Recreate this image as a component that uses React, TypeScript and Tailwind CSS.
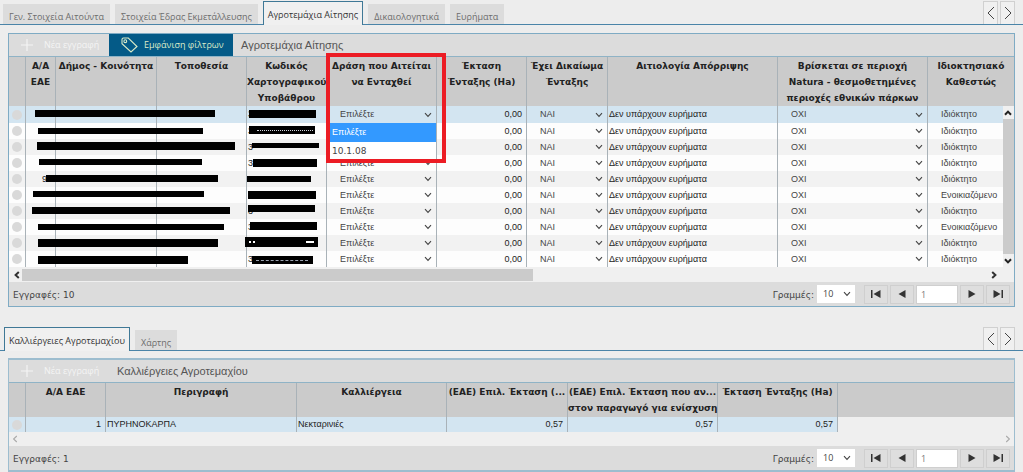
import { useState } from "react";
import type { ReactNode } from "react";

type Bar = [left: number, top: number, width: number, height: number];

interface Parcel {
  prefix?: string;
  code?: string;
  bar: Bar;
  codeBar: Bar;
  marks?: ReactNode;
  ownership: string;
}

const OWNED = "Ιδιόκτητο";
const RENTED = "Ενοικιαζόμενο";

const parcels: Parcel[] = [
  { bar: [9, 4, 180, 7], codeBar: [2, 4, 67, 8], code: "3", ownership: OWNED },
  {
    bar: [12, 5, 165, 6],
    codeBar: [2, 3, 66, 8],
    code: "3",
    marks: <span className="absolute left-2 top-1 w-14 border-t border-dotted border-gray-300" />,
    ownership: OWNED,
  },
  { bar: [11, 3, 198, 8], codeBar: [5, 4, 67, 5], code: "3", ownership: OWNED },
  { bar: [13, 4, 163, 6], codeBar: [6, 4, 64, 8], code: "3", ownership: OWNED },
  { prefix: "9", bar: [20, 4, 172, 7], codeBar: [0, 5, 64, 6], ownership: OWNED },
  { bar: [7, 4, 171, 6], codeBar: [1, 4, 68, 8], ownership: RENTED },
  { bar: [6, 4, 198, 7], codeBar: [1, 2, 67, 7], code: "3", ownership: OWNED },
  { bar: [12, 5, 186, 6], codeBar: [3, 3, 67, 8], code: "3", ownership: RENTED },
  {
    bar: [12, 4, 180, 8],
    codeBar: [-2, 2, 73, 10],
    marks: (
      <>
        <span className="absolute left-1 top-1 w-1.5 border-t-2 border-dotted border-white" />
        <span className="absolute right-1 top-1 w-2 border-t-2 border-white" />
      </>
    ),
    ownership: OWNED,
  },
  {
    bar: [12, 5, 150, 8],
    codeBar: [5, 5, 61, 8],
    code: "3",
    marks: <span className="absolute left-1 top-1 w-13 border-t border-dashed border-gray-400" />,
    ownership: OWNED,
  },
];

function Redaction({ bar, children }: { bar: Bar; children?: ReactNode }) {
  const [left, top, width, height] = bar;
  return (
    <span className="absolute z-10 bg-black" style={{ left, top, width, height }}>
      {children}
    </span>
  );
}

function Chevron({ className }: { className: string }) {
  return (
    <svg viewBox="0 0 8 6" className={className} fill="none" stroke="currentColor" strokeWidth="1.1" aria-hidden="true">
      <path d="M1 1.2 4 4.4 7 1.2" />
    </svg>
  );
}

function CellSelect({ label, options }: { label: string; options: string[] }) {
  return (
    <div className="relative flex items-center text-[#444]">
      <select aria-label={label} className="h-4 w-full appearance-none bg-transparent pl-[13px] outline-none">
        {options.map((o) => (
          <option key={o}>{o}</option>
        ))}
      </select>
      <Chevron className="pointer-events-none absolute right-1 h-1.5 w-2" />
    </div>
  );
}

function TabArrows() {
  return (
    <div className="ml-auto mr-2 flex gap-0.5 self-stretch text-[#444]">
      {["M9 4 3 10l6 6", "M3 4l6 6-6 6"].map((d, i) => (
        <button
          key={d}
          aria-label={i === 0 ? "Προηγούμενη καρτέλα" : "Επόμενη καρτέλα"}
          className="flex w-[15px] items-center justify-center border border-b-0 border-[#d0d0d0] bg-[#f0f0f0]"
        >
          <svg viewBox="0 0 12 20" className="h-5 w-3" fill="none" stroke="currentColor" strokeWidth="1">
            <path d={d} />
          </svg>
        </button>
      ))}
    </div>
  );
}

function Tabs({ items, initial, first }: { items: string[]; initial: number; first: string }) {
  const [active, setActive] = useState(initial);
  return (
    <div className="flex h-6 items-end border-b border-[#4a84a8] font-['Open_Sans',sans-serif] leading-3" role="tablist">
      <div className={`flex items-end gap-[5px] self-stretch ${first}`}>
        {items.map((t, i) => (
          <button
            key={t}
            role="tab"
            aria-selected={i === active}
            onClick={() => setActive(i)}
            className={
              i === active
                ? "-mb-px h-6 border border-b-0 border-[#3f7896] bg-[#f0f0f0] px-1 pt-0.5 text-[#333]"
                : "h-5 bg-[#dcdcdc] px-1.5 pt-1.5 text-[#6c6c6c]"
            }
          >
            {t}
          </button>
        ))}
      </div>
      <TabArrows />
    </div>
  );
}

function NewButton() {
  return (
    <button className="flex h-full w-[100px] items-center gap-[11px] whitespace-nowrap pl-3 font-['Open_Sans',sans-serif] text-[9px] text-[#f4f4f4]">
      <svg viewBox="0 0 12 12" className="size-3 shrink-0" stroke="currentColor" strokeWidth="1.2">
        <path d="M6 0v12M0 6h12" />
      </svg>
      Νέα εγγραφή
    </button>
  );
}

function Pager({ count, id }: { count: number; id: string }) {
  const button = "flex h-[19px] w-6 items-center justify-center border border-[#cfcfcf] bg-[#dedede] text-[#333]";
  return (
    <div className="flex h-6 items-center bg-[#dcdcdc] pl-1 text-[#444]">
      <span className="pt-1">Εγγραφές: {count}</span>
      <label htmlFor={id} className="ml-auto mr-[3px] pt-1">
        Γραμμές:
      </label>
      <div className="relative mr-[9px] flex items-center">
        <select id={id} className="h-[18px] w-[38px] appearance-none bg-white pl-1.5 font-['Open_Sans',sans-serif] outline-none">
          <option>10</option>
          <option>20</option>
        </select>
        <Chevron className="pointer-events-none absolute right-1 h-1.5 w-2" />
      </div>
      <div className="mr-1 flex items-center gap-0.5">
        <button className={button} aria-label="Πρώτη σελίδα">
          <svg viewBox="0 0 10 8" className="h-2 w-2.5" fill="currentColor">
            <path d="M0 0h1.5v8H0zM9.500 0v8L2.500 4z" />
          </svg>
        </button>
        <button className={button} aria-label="Προηγούμενη σελίδα">
          <svg viewBox="0 0 8 8" className="size-2" fill="currentColor">
            <path d="M7.500 0v8L0.500 4z" />
          </svg>
        </button>
        <input
          aria-label="Σελίδα"
          defaultValue="1"
          className="h-[19px] w-[42px] border border-[#cfcfcf] bg-white pl-1 font-['Open_Sans',sans-serif] text-[#777] outline-none"
        />
        <button className={button} aria-label="Επόμενη σελίδα">
          <svg viewBox="0 0 8 8" className="size-2" fill="currentColor">
            <path d="M0.500 0v8L7.500 4z" />
          </svg>
        </button>
        <button className={button} aria-label="Τελευταία σελίδα">
          <svg viewBox="0 0 10 8" className="h-2 w-2.5" fill="currentColor">
            <path d="M8.500 0H10v8H8.500zM0.500 0v8l7-4z" />
          </svg>
        </button>
      </div>
    </div>
  );
}

const line = "border-r border-[#a9b2b8]";
const head = `${line} p-0 pt-px align-top whitespace-pre font-bold text-[#222]`;
const cell = `${line} p-0 whitespace-nowrap`;

function ParcelTable() {
  const [open, setOpen] = useState(true);
  return (
    <table className="w-full table-fixed border-separate border-spacing-0 font-['Liberation_Sans',sans-serif] text-[9px] leading-[15px]">
      <colgroup>
        <col className="w-[17px]" />
        <col className="w-[30px]" />
        <col className="w-[101px]" />
        <col className="w-[90px]" />
        <col className="w-[80px]" />
        <col className="w-[110px]" />
        <col className="w-[90px]" />
        <col className="w-[81px]" />
        <col />
        <col className="w-[150px]" />
        <col className="w-[75px]" />
        <col className="w-[11px]" />
      </colgroup>
      <thead>
        <tr className="h-[49px] bg-[#cbcbcb] font-['DejaVu_Sans',sans-serif] text-[9px] leading-4">
          <th className={head} />
          <th className={head}>{"Α/Α\nΕΑΕ"}</th>
          <th className={head}>Δήμος - Κοινότητα</th>
          <th className={head}>Τοποθεσία</th>
          <th className={head}>{"Κωδικός\nΧαρτογραφικού\nΥποβάθρου"}</th>
          <th className={`${head} relative`}>
            {"Δράση που Αιτείται\nνα Ενταχθεί"}
            <span className="pointer-events-none absolute -left-px -top-1 z-30 h-[110px] w-[120px] border-4 border-[#ec1c24]" />
          </th>
          <th className={head}>{"Έκταση\nΈνταξης (Ha)"}</th>
          <th className={head}>{"Έχει Δικαίωμα\nΈνταξης"}</th>
          <th className={head}>Αιτιολογία Απόρριψης</th>
          <th className={head}>{"Βρίσκεται σε περιοχή\nNatura - θεσμοθετημένες\nπεριοχές εθνικών πάρκων"}</th>
          <th colSpan={2} className="whitespace-pre p-0 pt-px align-top font-bold text-[#222]">
            {"Ιδιοκτησιακό\nΚαθεστώς"}
          </th>
        </tr>
      </thead>
      <tbody className="text-[#222]">
        {parcels.map((p, i) => (
          <tr key={i} className={i === 0 ? "h-[17px] bg-[#d3e5f1]" : i % 2 ? "h-4 bg-[#fdfdfd]" : "h-4 bg-[#f2f2f2]"}>
            <td className={cell}>
              <span className="mx-auto block size-2.5 rounded-full bg-[#d9d9d9]" />
            </td>
            <td className={`${cell} relative pl-4`}>
              {p.prefix}
              <Redaction bar={p.bar} />
            </td>
            <td className={cell} />
            <td className={cell} />
            <td className={`${cell} relative pl-px`}>
              {p.code}
              <Redaction bar={p.codeBar}>{p.marks}</Redaction>
            </td>
            <td className={`${cell} relative`} onClick={i === 0 ? () => setOpen(!open) : undefined}>
              <CellSelect label="Δράση που αιτείται να ενταχθεί" options={["Επιλέξτε", "10.1.08"]} />
              {i === 0 && open && (
                <ul role="listbox" className="absolute left-0.5 top-[17px] z-20 w-[107px] bg-white leading-[19px]">
                  <li role="option" aria-selected="true" className="bg-[#3399ff] pl-[3px] text-white">
                    Επιλέξτε
                  </li>
                  <li role="option" aria-selected="false" className="pl-[3px] font-['DejaVu_Sans',sans-serif] text-[#444]">
                    10.1.08
                  </li>
                </ul>
              )}
            </td>
            <td className={`${cell} pr-1 text-right`}>0,00</td>
            <td className={cell}>
              <CellSelect label="Έχει δικαίωμα ένταξης" options={["ΝΑΙ", "ΟΧΙ"]} />
            </td>
            <td className={`${cell} pl-px`}>Δεν υπάρχουν ευρήματα</td>
            <td className={cell}>
              <CellSelect label="Βρίσκεται σε περιοχή Natura" options={["ΟΧΙ", "ΝΑΙ"]} />
            </td>
            <td className="whitespace-nowrap p-0 pl-[13px] text-[#444]">{p.ownership}</td>
            {i === 0 && (
              <td rowSpan={10} className="h-px bg-[#cbcbcb] p-0">
                <div className="flex h-full flex-col justify-between">
                  <span className="flex h-[13px] items-center justify-center bg-[#f0f0f0]">
                    <Chevron className="h-1.5 w-2 rotate-180 stroke-2" />
                  </span>
                  <span className="flex h-[13px] items-center justify-center bg-[#f0f0f0]">
                    <Chevron className="h-1.5 w-2 stroke-2" />
                  </span>
                </div>
              </td>
            )}
          </tr>
        ))}
      </tbody>
    </table>
  );
}

function CropTable() {
  return (
    <table className="w-full table-fixed border-separate border-spacing-0 font-['Liberation_Sans',sans-serif] text-[9px] leading-[15px]">
      <colgroup>
        <col className="w-[17px]" />
        <col className="w-[80px]" />
        <col className="w-[191px]" />
        <col className="w-[150px]" />
        <col className="w-[121px]" />
        <col className="w-[150px]" />
        <col className="w-[120px]" />
        <col />
      </colgroup>
      <thead>
        <tr className="h-[34px] bg-[#cbcbcb] font-['DejaVu_Sans',sans-serif] text-[9px] leading-4">
          <th className={head} />
          <th className={head}>Α/Α ΕΑΕ</th>
          <th className={head}>Περιγραφή</th>
          <th className={head}>Καλλιέργεια</th>
          <th className={head}>(ΕΑΕ) Επιλ. Έκταση (...</th>
          <th className={head}>{"(ΕΑΕ) Επιλ. Έκταση που αν...\nστον παραγωγό για ενίσχυση"}</th>
          <th className={head}>Έκταση Ένταξης (Ha)</th>
          <th className="p-0" />
        </tr>
      </thead>
      <tbody>
        <tr className="h-[15px] bg-[#d3e5f1] text-[#222]">
          <td className={cell}>
            <span className="mx-auto block size-2.5 rounded-full bg-[#d9d9d9]" />
          </td>
          <td className={`${cell} pr-1 text-right`}>1</td>
          <td className={`${cell} pl-px`}>ΠΥΡΗΝΟΚΑΡΠΑ</td>
          <td className={`${cell} pl-px`}>Νεκταρινιές</td>
          <td className={`${cell} pr-1 text-right`}>0,57</td>
          <td className={`${cell} pr-1 text-right`}>0,57</td>
          <td className={`${cell} pr-1 text-right`}>0,57</td>
          <td className="bg-[#efefef] p-0" />
        </tr>
      </tbody>
    </table>
  );
}

export default function App() {
  return (
    <main className="min-h-screen bg-[#ededed] pt-px font-['DejaVu_Sans',sans-serif] text-[9px]">
      <Tabs
        items={["Γεν. Στοιχεία Αιτούντα", "Στοιχεία Έδρας Εκμετάλλευσης", "Αγροτεμάχια Αίτησης", "Δικαιολογητικά", "Ευρήματα"]}
        initial={2}
        first="ml-[3px]"
      />
      <section className="mx-2 mt-2 border border-[#7fabc4]">
        <div className="flex h-[23px] items-center border-b border-[#8fb3c6] bg-[#dcdcdc]">
          <NewButton />
          <button className="flex h-full w-[124px] items-center gap-1.5 whitespace-nowrap bg-[#045a87] pl-3 font-['Open_Sans',sans-serif] text-[9px] text-[#dcecc8]">
            <svg viewBox="0 0 17 16" className="h-4 w-[17px] shrink-0" fill="none" stroke="currentColor" strokeWidth="1.1">
              <path d="M1 2.500v4.200L10 15l6-5.500L7.300 1H2.500Q1 1 1 2.500z" />
              <circle cx="4.300" cy="4.200" r="1.400" />
            </svg>
            Εμφάνιση φίλτρων
          </button>
          <h2 className="ml-2 font-['Liberation_Sans',sans-serif] text-[11px] text-[#555]">Αγροτεμάχια Αίτησης</h2>
        </div>
        <ParcelTable />
        <div className="flex h-[15px] items-center bg-[#f0f0f0] pl-1 text-[#333]">
          <Chevron className="h-1.5 w-2 rotate-90 stroke-2" />
          <span className="ml-px h-3 w-[511px] bg-[#cbcbcb]" />
          <Chevron className="ml-auto mr-4 h-1.5 w-2 -rotate-90 stroke-2" />
        </div>
        <Pager count={10} id="parcel-rows" />
      </section>
      <div className="h-5" />
      <Tabs items={["Καλλιέργειες Αγροτεμαχίου", "Χάρτης"]} initial={0} first="ml-1" />
      <section className="mx-2 mt-[7px] border border-y-2 border-[#9dbdcf]">
        <div className="flex h-[23px] items-center border-b border-[#8fb3c6] bg-[#dcdcdc]">
          <NewButton />
          <h2 className="ml-2 font-['Liberation_Sans',sans-serif] text-[11px] text-[#555]">Καλλιέργειες Αγροτεμαχίου</h2>
        </div>
        <CropTable />
        <div className="flex h-[14px] items-center justify-between bg-[#efefef] px-0.5 text-[#aaa]">
          <Chevron className="h-1.5 w-2 rotate-90" />
          <Chevron className="h-1.5 w-2 -rotate-90" />
        </div>
        <Pager count={1} id="crop-rows" />
      </section>
    </main>
  );
}
